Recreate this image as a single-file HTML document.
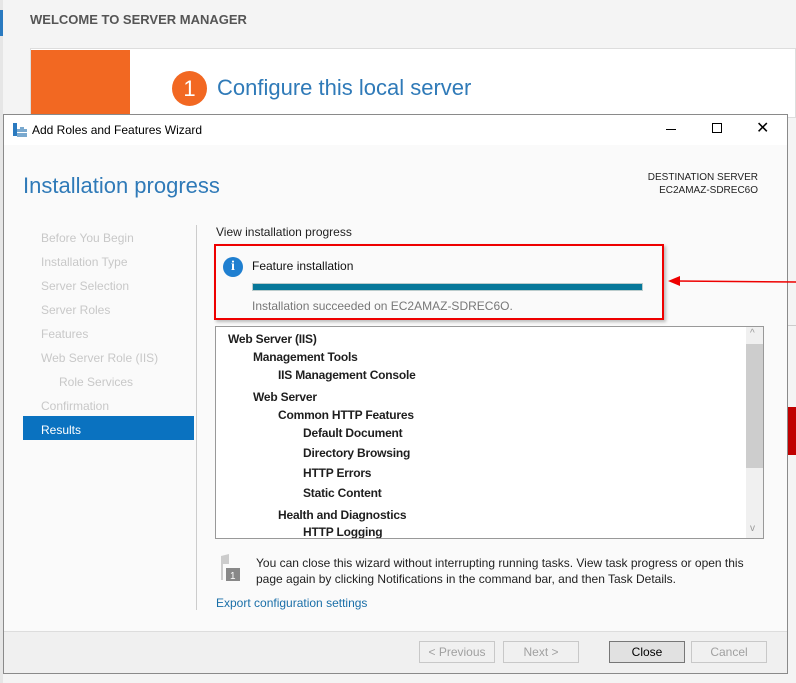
<!DOCTYPE html>
<html><head><meta charset="utf-8"><style>
*{margin:0;padding:0;box-sizing:border-box}
body{width:796px;height:683px;overflow:hidden;background:#f4f4f4;font-family:"Liberation Sans",sans-serif;position:relative;color:#000}
.a{position:absolute;white-space:nowrap}
.nav{position:absolute;left:41px;font-size:12px;color:#c8c8c8}
.t{position:absolute;font-size:12px;font-weight:bold;color:#1e1e1e;letter-spacing:-0.2px}
.btn{position:absolute;top:641px;height:22px;border:1px solid #c8c8c8;background:#f0f0f0;font-size:12px;color:#a0a0a0;text-align:center;line-height:20px}
</style></head><body>
<div class="a" style="left:0;top:0;width:3px;height:683px;background:#e6e6e6"></div>
<div class="a" style="left:0;top:10px;width:3px;height:26px;background:#2a7ac0"></div>
<div class="a" style="left:30px;top:12px;font-size:13px;font-weight:bold;color:#555">WELCOME TO SERVER MANAGER</div>
<div class="a" style="left:30px;top:48px;width:766px;height:70px;background:#fff;border:1px solid #ddd"></div>
<div class="a" style="left:31px;top:50px;width:99px;height:66px;background:#f26822"></div>
<div class="a" style="left:172px;top:71px;width:35px;height:35px;border-radius:50%;background:#f26822;color:#fff;font-size:22px;text-align:center;line-height:35px">1</div>
<div class="a" style="left:217px;top:75px;font-size:22px;color:#2f7ab8">Configure this local server</div>
<div class="a" style="left:787px;top:325px;width:9px;height:1px;background:#ccc"></div>
<div class="a" style="left:788px;top:407px;width:8px;height:48px;background:#c00000"></div>

<div class="a" style="left:3px;top:114px;width:785px;height:560px;background:#fafafa;border:1px solid #8a8a8a">
 <div class="a" style="left:0;top:0;width:783px;height:30px;background:#fff"></div>
 <svg class="a" style="left:8px;top:8px" width="16" height="16" viewBox="0 0 16 16"><rect x="1" y="0" width="4" height="13" fill="#2a7ac0"/><rect x="5" y="6" width="10" height="8" fill="#7aa9cf"/><rect x="8" y="4" width="4" height="2" fill="#7aa9cf"/><rect x="5" y="9" width="10" height="1" fill="#fff"/></svg>
 <div class="a" style="left:28px;top:8px;font-size:12px;color:#000">Add Roles and Features Wizard</div>
 <div class="a" style="left:662px;top:14px;width:10px;height:1px;background:#000"></div>
 <div class="a" style="left:708px;top:8px;width:10px;height:10px;border:1px solid #000"></div>
 <div class="a" style="left:752px;top:3px;font-size:16px;color:#000">✕</div>
 <div class="a" style="left:19px;top:58px;font-size:22px;color:#2f7ab8">Installation progress</div>
 <div class="a" style="left:620px;top:56px;font-size:10px;color:#222;text-align:right;line-height:13px;width:134px">DESTINATION SERVER<br>EC2AMAZ-SDREC6O</div>
 <div class="a" style="left:192px;top:110px;width:1px;height:385px;background:#ccc"></div>
</div>
<div class="nav" style="top:231px">Before You Begin</div>
<div class="nav" style="top:255px">Installation Type</div>
<div class="nav" style="top:279px">Server Selection</div>
<div class="nav" style="top:303px">Server Roles</div>
<div class="nav" style="top:327px">Features</div>
<div class="nav" style="top:351px">Web Server Role (IIS)</div>
<div class="nav" style="left:59px;top:375px">Role Services</div>
<div class="nav" style="top:399px">Confirmation</div>
<div class="a" style="left:23px;top:416px;width:171px;height:24px;background:#0a72c0"></div>
<div class="nav" style="top:423px;color:#fff">Results</div>

<div class="a" style="left:216px;top:225px;font-size:12px;color:#222">View installation progress</div>
<div class="a" style="left:214px;top:244px;width:450px;height:76px;border:2px solid #e00;box-shadow:2px 2px 3px #bbb"></div>
<div class="a" style="left:223px;top:257px;width:20px;height:20px;border-radius:50%;background:#1f7fd0;color:#fff;font:bold 14px 'Liberation Serif',serif;text-align:center;line-height:20px">i</div>
<div class="a" style="left:252px;top:259px;font-size:12px;color:#111">Feature installation</div>
<div class="a" style="left:252px;top:283px;width:391px;height:8px;background:#07789a;border:1px solid #bcc"></div>
<div class="a" style="left:252px;top:299px;font-size:12px;color:#777">Installation succeeded on EC2AMAZ-SDREC6O.</div>
<svg class="a" style="left:668px;top:274px" width="128" height="14"><line x1="8" y1="7" x2="128" y2="8" stroke="#e00" stroke-width="1.5"/><polygon points="0,7 12,2 12,12" fill="#e00"/></svg>

<div class="a" style="left:215px;top:326px;width:549px;height:213px;background:#fff;border:1px solid #999;overflow:hidden">
 <div class="a" style="left:530px;top:0;width:17px;height:211px;background:#f0f0f0"></div>
 <div class="a" style="left:530px;top:17px;width:17px;height:124px;background:#cdcdcd"></div>
 <div class="a" style="left:534px;top:1px;font-size:10px;color:#999">^</div>
 <div class="a" style="left:534px;top:196px;font-size:10px;color:#999">v</div>
</div>
<div class="t" style="left:228px;top:332px">Web Server (IIS)</div>
<div class="t" style="left:253px;top:350px">Management Tools</div>
<div class="t" style="left:278px;top:368px">IIS Management Console</div>
<div class="t" style="left:253px;top:390px">Web Server</div>
<div class="t" style="left:278px;top:408px">Common HTTP Features</div>
<div class="t" style="left:303px;top:426px">Default Document</div>
<div class="t" style="left:303px;top:446px">Directory Browsing</div>
<div class="t" style="left:303px;top:466px">HTTP Errors</div>
<div class="t" style="left:303px;top:486px">Static Content</div>
<div class="t" style="left:278px;top:508px">Health and Diagnostics</div>
<div class="t" style="left:303px;top:525px;height:13px;overflow:hidden">HTTP Logging</div>

<svg class="a" style="left:219px;top:554px" width="24" height="28"><polygon points="2,2 10,0 10,10 4,10 4,26 2,26" fill="#ccc"/><rect x="7" y="14" width="14" height="13" fill="#888"/><text x="11" y="25" font-size="10" fill="#fff" font-family="Liberation Sans">1</text></svg>
<div class="a" style="left:256px;top:555px;font-size:12px;color:#222;line-height:16px">You can close this wizard without interrupting running tasks. View task progress or open this<br>page again by clicking Notifications in the command bar, and then Task Details.</div>
<div class="a" style="left:216px;top:596px;font-size:12px;color:#1a6fa8">Export configuration settings</div>

<div class="a" style="left:4px;top:631px;width:783px;height:42px;background:#f0f0f0;border-top:1px solid #ddd"></div>
<div class="btn" style="left:419px;width:76px">&lt; Previous</div>
<div class="btn" style="left:503px;width:76px">Next &gt;</div>
<div class="btn" style="left:609px;width:76px;border-color:#777;background:#e1e1e1;color:#000">Close</div>
<div class="btn" style="left:691px;width:76px">Cancel</div>
</body></html>
